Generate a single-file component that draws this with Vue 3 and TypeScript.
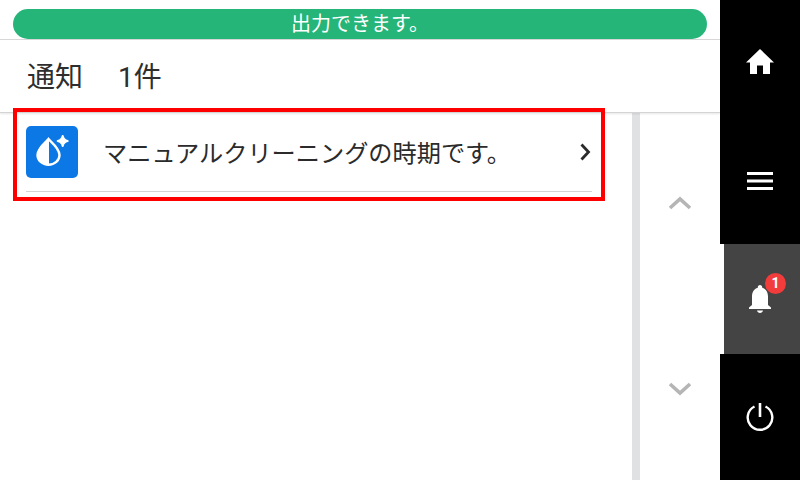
<script setup lang="ts">
const message = "マニュアルクリーニングの時期です。"
const count = 1
</script>

<template>
  <div class="screen">
    <main class="main">
      <div class="status-wrap">
        <div class="status">出力できます。</div>
      </div>
      <header class="header">
        <span class="title">通知</span>
        <span class="count">{{ count }}件</span>
      </header>
      <div class="body">
        <div class="list">
          <div class="row">
            <div class="row-icon">
              <svg width="52" height="52" viewBox="0 0 52 52">
                <path d="M22.500 13c-2 2.500-11 9-11 16 0 5.500 4.900 9.800 11 9.800s11-4.300 11-9.800c0-7-9-13.500-11-16z" fill="none" stroke="#fff" stroke-width="2.400"/>
                <path d="M22.500 13c-2 2.500-11 9-11 16 0 5.500 4.900 9.800 11 9.800z" fill="#fff" stroke="#fff" stroke-width="1"/>
                <path d="M36.700 10c.6 3.200 1.800 4.400 5 5-3.200.6-4.400 1.800-5 5-.6-3.200-1.800-4.400-5-5 3.200-.6 4.400-1.800 5-5z" fill="#fff" stroke="#fff" stroke-width="2" stroke-linejoin="round"/>
              </svg>
            </div>
            <span class="row-text">{{ message }}</span>
            <svg class="row-arrow" width="14" height="18" viewBox="0 0 14 18">
              <path d="M3.500 1.500l7 7.500-7 7.500" fill="none" stroke="#2b2b2b" stroke-width="2.800"/>
            </svg>
          </div>
        </div>
        <div class="track"></div>
        <div class="pager">
          <svg width="24" height="14" viewBox="0 0 24 14">
            <path d="M2 12L12 3l10 9" fill="none" stroke="#b5b5b5" stroke-width="3.600"/>
          </svg>
          <svg width="24" height="14" viewBox="0 0 24 14">
            <path d="M2 2l10 9 10-9" fill="none" stroke="#b5b5b5" stroke-width="3.600"/>
          </svg>
        </div>
        <div class="highlight"></div>
      </div>
    </main>

    <nav class="side">
      <div class="side-btn">
        <svg width="30" height="28" viewBox="0 0 30 28">
          <path d="M15 2L1 15.500h4V27h7v-8.500h6V27h7V15.500h4z" fill="#fff"/>
        </svg>
      </div>
      <div class="side-btn side-menu">
        <svg width="28" height="20" viewBox="0 0 28 20">
          <path d="M1 2.500h26M1 10h26M1 17.500h26" fill="none" stroke="#fff" stroke-width="2.800"/>
        </svg>
      </div>
      <div class="side-btn active">
        <div class="bell">
          <svg width="26" height="32" viewBox="0 0 26 32">
            <path d="M13 2c-1.300 0-2.200 1-2.200 2.200v.6C6.800 6 5 9.500 5 13.500V22l-3 2.500V26h22v-1.500L21 22v-8.500c0-4-1.800-7.500-5.800-8.700v-.6C15.200 3 14.300 2 13 2z" fill="#fff"/>
            <path d="M10 27.500h6c-.3 1.500-1.500 2.500-3 2.500s-2.700-1-3-2.500z" fill="#fff"/>
          </svg>
          <span class="badge">{{ count }}</span>
        </div>
      </div>
      <div class="side-btn side-power">
        <svg width="30" height="30" viewBox="0 0 30 30">
          <path d="M9.500 4.500a12.300 12.300 0 1 0 11 0" fill="none" stroke="#fff" stroke-width="2.400"/>
          <path d="M15 1v14" fill="none" stroke="#fff" stroke-width="2.600"/>
        </svg>
      </div>
    </nav>
  </div>
</template>

<style>
html, body {
  margin: 0;
  background: #fff;
}
</style>

<style scoped>
.screen {
  display: flex;
  width: 800px;
  height: 480px;
  overflow: hidden;
  background: #fff;
  font-family: Roboto, "Noto Sans CJK JP", sans-serif;
}

.main {
  display: flex;
  flex-direction: column;
  width: 720px;
}

.status-wrap {
  height: 40px;
  padding: 9px 13px 0;
  box-sizing: border-box;
  border-bottom: 1px solid #d8d8d8;
}

.status {
  width: 694px;
  height: 30px;
  border-radius: 15px;
  background: #25b579;
  color: #fff;
  font-size: 20px;
  line-height: 30px;
  text-align: center;
}

.header {
  position: relative;
  z-index: 1;
  display: flex;
  align-items: center;
  gap: 35px;
  height: 73px;
  padding: 0 0 2px 27px;
  box-sizing: border-box;
  background: #fff;
  color: #2e2e2e;
  font-size: 28px;
  border-bottom: 1px solid #d4d4d4;
  box-shadow: 0 1px 2px rgba(0, 0, 0, 0.1);
}

.body {
  position: relative;
  display: flex;
  flex: 1;
}

.list {
  width: 632px;
}

.row {
  display: flex;
  align-items: center;
  width: 566px;
  height: 79px;
  margin-left: 26px;
  box-sizing: border-box;
  padding: 13px 0;
  border-bottom: 1px solid #d4d4d4;
}

.row-icon {
  width: 52px;
  height: 52px;
  border-radius: 5px;
  background: #0c78e6;
}

.row-text {
  flex: 1;
  margin-left: 25px;
  padding-bottom: 2px;
  color: #2b2b2b;
  font-size: 24.2px;
  white-space: nowrap;
}

.track {
  width: 8px;
  background: #e0e1e3;
}

.pager {
  display: flex;
  flex-direction: column;
  align-items: center;
  gap: 172px;
  flex: 1;
  padding-top: 83px;
}

.highlight {
  position: absolute;
  z-index: 2;
  left: 13px;
  top: -5px;
  width: 592px;
  height: 93px;
  box-sizing: border-box;
  border: 4px solid #ff0000;
}

.side {
  display: flex;
  flex-direction: column;
  width: 80px;
  background: #000;
}

.side-btn {
  display: flex;
  align-items: center;
  justify-content: center;
  height: 122px;
}

.side-menu {
  box-sizing: border-box;
  padding-bottom: 4px;
}

.active {
  height: 110px;
  background: #444;
  border-left: 4px solid #fff;
}

.side-power {
  flex: 1;
}

.bell {
  position: relative;
  display: flex;
  margin-left: -4px;
}

.badge {
  position: absolute;
  top: -10px;
  right: -13px;
  width: 21px;
  height: 21px;
  border-radius: 50%;
  background: #f23c3c;
  color: #fff;
  font-size: 14px;
  font-weight: 700;
  line-height: 21px;
  text-align: center;
}
</style>
